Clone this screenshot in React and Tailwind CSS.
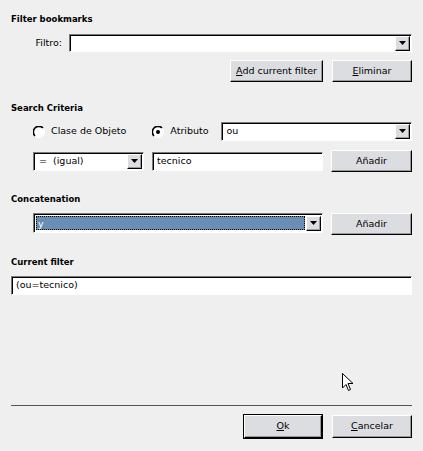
const FONT = { fontFamily: '"DejaVu Sans", "Liberation Sans", sans-serif' }

function Arrow() {
  return (
    <div className="w-[15px] h-[15px] bg-[#dcdde1] border border-t-white border-l-white border-b-black border-r-black shadow-[inset_-1px_-1px_0_#9a9a9a] flex items-center justify-center">
      <svg width="7" height="5" viewBox="0 0 7 5">
        <path d="M0 0 H7 L3.5 4 Z" fill="#000" />
      </svg>
    </div>
  )
}

function Combo({ value, selected, className = '' }) {
  return (
    <div className={`flex items-center bg-white border border-t-[#7a7a7a] border-l-[#7a7a7a] border-b-white border-r-white shadow-[inset_1px_1px_0_#000] pl-[2px] pr-[1px] ${className}`}>
      {selected ? (
        <div className="flex-1 self-stretch my-[2px] mr-[1px] bg-[#6a8db3] border border-dotted border-black text-white pl-[1px] leading-[14px]">
          {value}
        </div>
      ) : (
        <div className="flex-1 pl-[3px] truncate">{value}</div>
      )}
      <Arrow />
    </div>
  )
}

function Field({ value, className = '' }) {
  return (
    <div className={`flex items-center bg-white border border-t-[#7a7a7a] border-l-[#7a7a7a] border-b-white border-r-white shadow-[inset_1px_1px_0_#000] pl-[4px] ${className}`}>
      {value}
    </div>
  )
}

function Button({ children, className = '' }) {
  return (
    <div className={`flex items-center justify-center bg-[#dcdde1] border border-t-white border-l-white border-b-black border-r-black shadow-[inset_-1px_-1px_0_#9a9a9a] ${className}`}>
      {children}
    </div>
  )
}

function Radio({ checked }) {
  return (
    <svg width="12" height="12" viewBox="0 0 12 12">
      <circle cx="6" cy="6" r="5" fill="#fff" />
      <path d="M10 2 A5.5 5.5 0 0 0 2 10" fill="none" stroke="#000" strokeWidth="1.6" />
      <path d="M2 10 A5.5 5.5 0 0 0 10 2" fill="none" stroke="#fff" strokeWidth="1" />
      {checked && <circle cx="6" cy="6" r="2" fill="#000" />}
    </svg>
  )
}

function Heading({ children, className = '' }) {
  return <div className={`font-bold text-[8.5px] leading-[12px] ${className}`}>{children}</div>
}

export default function App() {
  return (
    <div style={FONT} className="relative w-[423px] h-[451px] bg-[#efefef] text-black text-[9.5px] px-[11px] pt-[13px] flex flex-col">
      <Heading>Filter bookmarks</Heading>

      <div className="mt-[9px] flex items-center h-[18px]">
        <div className="w-[51px] text-right">Filtro:</div>
        <Combo value="" className="ml-[7px] flex-1 h-[18px]" />
      </div>

      <div className="mt-[8px] flex justify-end gap-[9px]">
        <Button className="w-[93px] h-[22px]"><span><u>A</u>dd current filter</span></Button>
        <Button className="w-[80px] h-[22px]"><span><u>E</u>liminar</span></Button>
      </div>

      <Heading className="mt-[20px]">Search Criteria</Heading>

      <div className="mt-[8px] flex items-center h-[19px] pl-[22px]">
        <Radio />
        <span className="ml-[6px]">Clase de Objeto</span>
        <div className="ml-[26px]"><Radio checked /></div>
        <span className="ml-[6px]">Atributo</span>
        <Combo value="ou" className="ml-[12px] flex-1 h-[19px]" />
      </div>

      <div className="mt-[9px] flex items-center h-[22px] pl-[22px]">
        <Combo value={'=\u00a0\u00a0(igual)'} className="w-[111px] h-[19px]" />
        <Field value="tecnico" className="ml-[8px] w-[171px] h-[19px]" />
        <Button className="ml-[8px] flex-1 h-[22px]">Añadir</Button>
      </div>

      <Heading className="mt-[21px]">Concatenation</Heading>

      <div className="mt-[8px] flex items-start h-[22px] pl-[22px]">
        <Combo value="y" selected className="w-[290px] h-[20px]" />
        <Button className="ml-[8px] flex-1 h-[22px]">Añadir</Button>
      </div>

      <Heading className="mt-[21px]">Current filter</Heading>

      <Field value="(ou=tecnico)" className="mt-[8px] h-[19px]" />

      <div className="mt-[110px] h-[1px] bg-[#555]" />

      <div className="mt-[8px] flex justify-end items-center gap-[9px]">
        <div className="border border-black">
          <Button className="w-[78px] h-[23px]"><span><u>O</u>k</span></Button>
        </div>
        <Button className="w-[80px] h-[23px]"><span><u>C</u>ancelar</span></Button>
      </div>

      <svg className="absolute left-[342px] top-[373px]" width="12" height="19" viewBox="0 0 12 19">
        <path d="M0.5 0.5 V15 L4 11.5 L6.5 17.5 L8.5 16.5 L6 10.5 H11 Z" fill="#fff" stroke="#000" strokeWidth="1" strokeLinejoin="miter" />
      </svg>
    </div>
  )
}
